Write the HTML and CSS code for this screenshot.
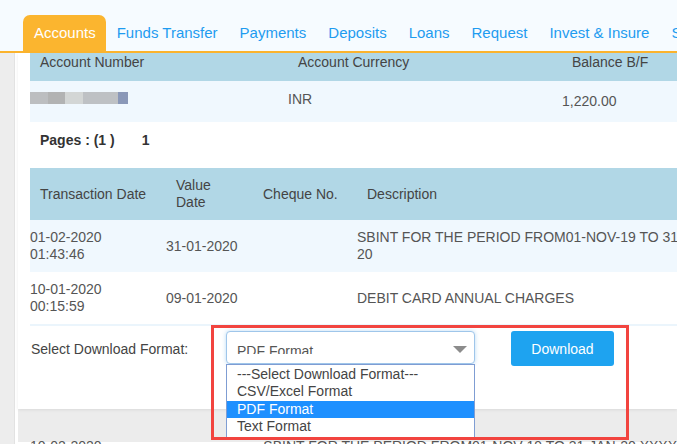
FILE: index.html
```html
<!DOCTYPE html>
<html>
<head>
<meta charset="utf-8">
<link rel="stylesheet" href="styles.css">
</head>
<body>
<nav class="nav">
  <a class="tab active">Accounts</a>
  <a class="tab">Funds Transfer</a>
  <a class="tab">Payments</a>
  <a class="tab">Deposits</a>
  <a class="tab">Loans</a>
  <a class="tab">Request</a>
  <a class="tab">Invest &amp; Insure</a>
  <a class="tab">Services</a>
</nav>
<div class="main">
  <div class="gutter"></div>
  <div class="panel">
    <div class="content">
      <div class="grid t1 head h28 top">
        <div class="hc">Account Number</div>
        <div class="hc">Account Currency</div>
        <div class="hc">Balance B/F</div>
      </div>
      <div class="grid t1 row alt h41 top">
        <div class="mask"><span class="m1"></span><span class="m2"></span><span class="m3"></span><span class="m4"></span><span class="m5"></span></div>
        <div class="cur">INR</div>
        <div class="bal">1,220.00</div>
      </div>
      <div class="pages"><b>Pages : (1 )</b><b class="pnum">1</b></div>

      <div class="grid t2 head h52">
        <div class="hc">Transaction Date</div>
        <div class="hc">Value<br>Date</div>
        <div class="hc">Cheque No.</div>
        <div class="hc">Description</div>
      </div>
      <div class="grid t2 row alt h52">
        <div>01-02-2020<br>01:43:46</div>
        <div>31-01-2020</div>
        <div></div>
        <div class="desc">SBINT FOR THE PERIOD FROM01-NOV-19 TO 31-JAN-<br>20</div>
      </div>
      <div class="grid t2 row h52 last">
        <div>10-01-2020<br>00:15:59</div>
        <div>09-01-2020</div>
        <div></div>
        <div class="desc">DEBIT CARD ANNUAL CHARGES</div>
      </div>

      <div class="dl-row">
        <label class="dl-label">Select Download Format:</label>
        <div class="select">
          <div class="select-clip"><div class="select-text">PDF Format</div></div>
          <span class="arrow"></span>
          <ul class="options">
            <li>---Select Download Format---</li>
            <li>CSV/Excel Format</li>
            <li class="sel">PDF Format</li>
            <li>Text Format</li>
          </ul>
        </div>
        <button class="btn">Download</button>
      </div>
    </div>
    <div class="gray"></div>
    <div class="next">
      <span class="n1">10-02-2020</span>
      <span class="n2">SBINT FOR THE PERIOD FROM01-NOV-19 TO 31-JAN-20 XXXX</span>
    </div>
  </div>
</div>
<div class="highlight"></div>
</body>
</html>
```

FILE: styles.css
```css
html, body {
  margin: 0;
  padding: 0;
  overflow: hidden;
  width: 677px;
  height: 444px;
}
body {
  font-family: "Liberation Sans", Arial, sans-serif;
  font-size: 14px;
  color: #444;
  background: #fff;
  position: relative;
}
.nav {
  display: flex;
  align-items: flex-end;
  height: 51px;
  padding-left: 23px;
  background: #f6fbff;
  border-bottom: 2px solid #fbb32d;
  white-space: nowrap;
  overflow: hidden;
}
.tab {
  display: block;
  height: 36px;
  line-height: 36px;
  padding: 0 11px;
  font-size: 15px;
  color: #1e9bf0;
  flex: none;
}
.tab.active {
  background: #fbb52f;
  color: #fff;
  border-radius: 7px 7px 0 0;
  padding: 0 10px 0 11px;
}
.main {
  display: flex;
  height: 391px;
}
.gutter {
  width: 14px;
  flex: none;
  background: #ededed;
  border-right: 1px solid #e2e2e2;
}
.panel {
  flex: 1;
  background: #fff;
  padding-left: 3px;
  overflow: hidden;
}
.content {
  background: #fff;
  padding-left: 12px;
  position: relative;
  z-index: 1;
  box-shadow: 0 1px 3px rgba(0,0,0,0.08);
}
.grid {
  display: grid;
  width: 700px;
  align-items: center;
}
.grid.top { align-items: start; }
.t1 { grid-template-columns: 258px 274px 1fr; }
.t2 { grid-template-columns: 136px 87px 104px 1fr; }
.head { background: #b1d7e6; color: #444; }
.t1.head .hc { padding-top: 1px; }
.hc { padding-left: 10px; line-height: 17px; }
.row { color: #555; line-height: 17px; }
.alt { background: #f0f8fe; }
.h28 { height: 28px; }
.h41 { height: 41px; }
.h52 { height: 52px; }
.row.last { border-bottom: 2px solid #ebf5fc; }
.desc { white-space: nowrap; }
.mask { display: flex; height: 12px; margin-top: 11px; }
.mask span { display: block; height: 12px; }
.m1 { width: 18px; background: #bcbec0; }
.m2 { width: 17px; background: #b2b3b3; }
.m3 { width: 18px; background: #d3d6d5; }
.m4 { width: 35px; background: #bec1c4; }
.m5 { width: 10px; background: #8a98b8; }
.cur { padding-top: 10px; }
.bal { padding-top: 12px; }
.pages {
  height: 46px;
  box-sizing: border-box;
  display: flex;
  align-items: flex-start;
  padding: 10px 0 0 10px;
  line-height: 17px;
  color: #333;
}
.pnum { margin-left: 27px; }
.dl-row {
  height: 83px;
  display: flex;
  align-items: flex-start;
  padding-top: 5px;
  box-sizing: border-box;
}
.dl-label {
  width: 195px;
  padding-left: 1px;
  padding-top: 10px;
  color: #444;
  line-height: 17px;
}
.select {
  position: relative;
  width: 249px;
  height: 33px;
  box-sizing: border-box;
  border: 1px solid #9fc6ea;
  border-radius: 4px;
  box-shadow: 0 0 4px rgba(102,175,233,0.45);
  background: #fff;
}
.select-clip {
  height: 22px;
  overflow: hidden;
  padding-left: 10px;
}
.select-text {
  padding-top: 11px;
  line-height: 17px;
  color: #555;
}
.arrow {
  position: absolute;
  right: 7px;
  top: 14px;
  width: 0;
  height: 0;
  border-left: 7px solid transparent;
  border-right: 7px solid transparent;
  border-top: 7px solid #8c8c8c;
}
.options {
  position: absolute;
  left: -1px;
  top: 32px;
  width: 249px;
  box-sizing: border-box;
  margin: 0;
  padding: 1px 0 1px;
  list-style: none;
  background: #fff;
  border: 1px solid #7f9dd3;
  z-index: 5;
}
.options li {
  height: 17.4px;
  line-height: 17px;
  padding-left: 10px;
  color: #444;
  white-space: nowrap;
}
.options li.sel {
  background: #1e90ff;
  color: #fff;
}
.btn {
  margin-left: 36px;
  width: 103px;
  height: 35px;
  border: none;
  border-radius: 3px;
  background: #1ea3f0;
  color: #fff;
  font-family: "Liberation Sans", Arial, sans-serif;
  font-size: 14px;
  padding: 0;
}
.gray {
  height: 33px;
  background: #ececec;
}
.next {
  height: 12px;
  line-height: 8px;
  color: #555;
  white-space: nowrap;
  display: flex;
}
.n1 { margin-left: 12px; width: 327px; }
.highlight {
  position: absolute;
  left: 211px;
  top: 325px;
  width: 418px;
  height: 115px;
  box-sizing: border-box;
  border: 3px solid #f2443f;
  z-index: 10;
  pointer-events: none;
}
```
